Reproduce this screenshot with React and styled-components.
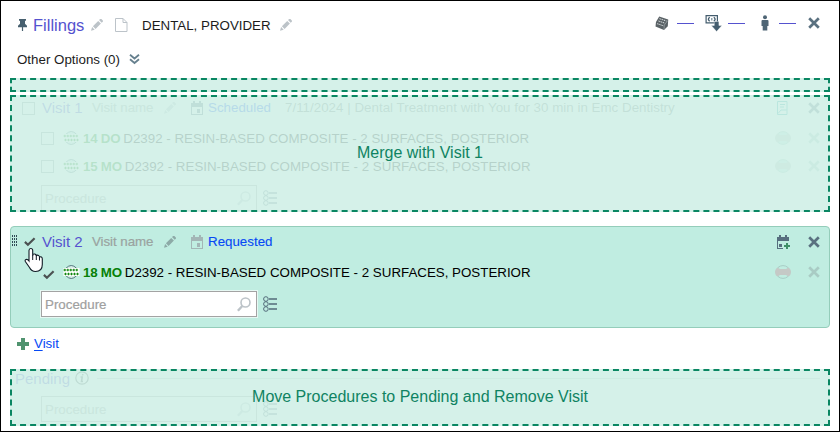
import React from "react";
import styled, { createGlobalStyle } from "styled-components";

const Global = createGlobalStyle`
  * { box-sizing: border-box; }
  body { margin: 0; background: #fff; }
`;

const Frame = styled.main`
  width: 840px;
  height: 432px;
  border: 1px solid #000;
  padding: 0 9px;
  background: #fff;
  color: #1c1c1c;
  font-family: "Liberation Sans", Arial, sans-serif;
  font-size: 13.33px;
  white-space: nowrap;
  overflow: hidden;
  display: flex;
  flex-direction: column;
  svg { display: block; flex: none; }
`;

const Header = styled.header`
  height: 48px;
  flex: none;
  display: grid;
  grid-template-columns: 16px 58px 24px 27px 138px 1fr auto;
  align-items: center;
  padding: 0 10px 0 7px;
`;

const Title = styled.h1`
  margin: 0;
  font-weight: 400;
  font-size: 16.5px;
  line-height: 20px;
  color: #5552cf;
`;

const Provider = styled.span`
  line-height: 18px;
  padding-top: 1px;
`;

const HeaderTools = styled.div`
  display: grid;
  grid-template-columns: 22px 28px 23px 33px 18px 29px 12px;
  align-items: center;
  height: 32px;
  margin-top: -4px;
`;

const Dash = styled.span`
  width: 17px;
  height: 1px;
  background: #5552cf;
  margin-top: 1px;
`;

const Options = styled.div`
  height: 20px;
  margin-bottom: 2px;
  flex: none;
  display: flex;
  align-items: center;
  gap: 9px;
  padding-left: 7px;
`;

const DropStrip = styled.div`
  height: 14px;
  flex: none;
  margin: 7px 0 3px;
  border: 2px dashed #0a8662;
  background: #d5f1e9;
`;

const Card = styled.section`
  position: relative;
  flex: none;
  height: ${(p) => p.$height}px;
  overflow: hidden;
  padding: ${(p) => (p.$active ? "0 9px 0 0" : "1px 10px 1px 1px")};
  border: ${(p) => (p.$active ? "1px solid #94cdba" : "0")};
  border-radius: ${(p) => (p.$active ? 4 : 0)}px;
  background: ${(p) => (p.$active ? "#c0ede1" : "#fff")};
`;

const DropOverlay = styled.div`
  position: absolute;
  inset: 0;
  display: flex;
  align-items: center;
  justify-content: center;
  padding-bottom: 2px;
  border: 2px dashed #0a8662;
  background: rgba(207, 239, 230, 0.88);
  color: #0f8362;
  font-size: 16px;
`;

const VisitHeader = styled.div`
  height: ${(p) => p.$height}px;
  display: grid;
  grid-template-columns: 11px 20px 50px 72px 27px 17px 77px 1fr 31px 12px;
  align-items: center;
`;

const VisitTitle = styled.h2`
  margin: 0;
  font-weight: 400;
  font-size: 15px;
  line-height: 16px;
  padding-bottom: 1px;
  color: #5552cf;
`;

const VisitName = styled.span`
  padding-bottom: 1px;
  letter-spacing: -0.05px;
  color: #9aa3a0;
  -webkit-text-stroke: 0.2px #9aa3a0;
`;

const Status = styled.a`
  padding-bottom: 1px;
  color: #0648f5;
  -webkit-text-stroke: 0.1px #0648f5;
`;

const Appointment = styled.span`
  padding-bottom: 1px;
  letter-spacing: 0.02px;
  color: #6c7674;
`;

const ProcedureRow = styled.div`
  height: 28px;
  margin-top: ${(p) => p.$top || 0}px;
  display: grid;
  grid-template-columns: 30px 22px 20px 1fr 33px 12px;
  align-items: center;
`;

const ProcedureText = styled.span`
  color: #000;
`;

const Surface = styled.b`
  color: #078007;
  font-size: 13.33px;
  letter-spacing: -0.25px;
  margin-right: 3px;
`;

const Checkbox = styled.span`
  width: 13px;
  height: 13px;
  border: 1px solid #8f9c99;
`;

const SearchRow = styled.div`
  display: flex;
  align-items: center;
  gap: 6px;
  margin: ${(p) => p.$top}px 0 0 30px;
`;

const SearchField = styled.div`
  width: 216px;
  height: 26px;
  display: flex;
  align-items: center;
  justify-content: space-between;
  padding: 0 5px 0 3px;
  border: 1px solid #a3a3a3;
  box-shadow: 0 0 0 1px rgba(255, 255, 255, 0.6);
  background: #fff;
  color: #a0a0a0;
  -webkit-text-stroke: 0.2px #a0a0a0;
`;

const AddVisit = styled.div`
  height: 32px;
  margin-bottom: 9px;
  flex: none;
  display: flex;
  align-items: center;
  gap: 5px;
  padding-left: 7px;
`;

const AddLink = styled.a`
  padding-bottom: 1px;
  color: #0648f5;
  u { text-underline-offset: 2px; }
`;

const PendingHeader = styled.div`
  height: 16px;
  display: flex;
  align-items: center;
  gap: 5px;
  padding-left: 4px;
  color: #5552cf;
  font-size: 15px;
`;

const Rule = styled.span`
  flex: 1;
  height: 1px;
  margin-left: 3px;
  background: #bcc5c3;
`;

const Cursor = styled.svg`
  position: absolute;
  left: 13px;
  top: 20px;
`;

const TitleCheck = styled.span`
  padding: 0 0 1px 1.5px;
`;

const RowCheck = styled.span`
  padding: 5px 0 0 2px;
`;

const GripSlot = styled.span`
  padding: 0 0 2px 1px;
`;

const CardGap = styled.div`
  height: 14px;
  flex: none;
`;

const Pin = () => (
  <svg width="11" height="14" viewBox="0 0 11 14" fill="#47606f">
    <path d="M2 1h7v1.8H8v3l2 2v1.4H6.1V13H4.9V9.200H1V7.800l2-2v-3H2z" />
  </svg>
);

const Pencil = ({ color = "#bcc3c8" }) => (
  <svg width="13" height="13" viewBox="0.500 0.500 13 13" fill={color}>
    <path d="M.5 12.300 1.600 8.600 4.200 11.200zM2.400 7.700 7.700 2.400 10.400 5.100 5.100 10.400zM8.500 1.600 9.700.5q.6-.4 1.200.1l1.400 1.400q.5.6 0 1.200L11.200 4.300z" />
  </svg>
);

const Page = () => (
  <svg width="13" height="15" viewBox="0 1 13 15" fill="none" stroke="#bcc3c9">
    <path d="M.5 1.500h7.500l4 4v9H.5zM8 1.500V5.500h4" />
  </svg>
);

const Chevrons = () => (
  <svg width="11" height="12" viewBox="0 0 11 12" fill="none" stroke="#66808e" strokeWidth="1.8">
    <path d="M1 1.700 5.500 5.500 10 1.700M1 6.200 5.500 10 10 6.200" />
  </svg>
);

const Close = ({ color = "#5a7180" }) => (
  <svg width="12" height="12" viewBox="0 0 12 12" fill="none" stroke={color} strokeWidth="2.700">
    <path d="M1.200 1.200 10.800 10.800M10.800 1.200 1.200 10.800" />
  </svg>
);

const Ledger = () => (
  <svg width="14" height="15" viewBox="0 0 14 15">
    <path d="M4.200.5 13.200 3.500 12.800 10.200 9 14 .5 10.500 1 6z" fill="#5a6266" />
    <path d="M4.500 2.700 11.500 5M3.500 5 10 7.200M2.200 7.700l6.500 2.200" stroke="#e3e8ea" strokeDasharray="1.400 .8" />
    <path d="M12.800 4.500 9.300 9 9 13.500" stroke="#aab2b6" strokeWidth=".6" fill="none" />
  </svg>
);

const CashDown = () => (
  <svg width="17" height="17" viewBox="-0.500 0 17 17">
    <path d="M.6.600h11.300v7.200H.6z" fill="#fff" stroke="#445d6e" strokeWidth="1.200" />
    <path d="M4.200 2.200Q1.600 4.200 4.200 6.200M8.300 2.200Q10.900 4.200 8.300 6.200" fill="none" stroke="#445d6e" strokeWidth="1.400" />
    <path d="M5.500 3h1.500v2.500H5.500z" fill="#8ba0aa" />
    <path d="M8.800 6.500h4.600v4h3L11.100 16.500 5.800 10.500h3z" fill="#445d6e" stroke="#fff" strokeWidth=".4" />
  </svg>
);

const Person = () => (
  <svg width="8" height="16" viewBox="0 0 8 16" fill="#4e6575">
    <circle cx="4" cy="2.200" r="2" />
    <path d="M1.500 5h5q1 0 1 1v5H6.300V15.500H1.700V11H.5V6q0-1 1-1z" />
  </svg>
);

const Calendar = ({ color = "#a3b6b6" }) => (
  <svg width="13" height="14" viewBox="0 0 13 14" shapeRendering="crispEdges">
    <path d="M0 2h2V0h2v2h4V0h2v2h2v12H0zM1 6v7h10V6z" fill={color} fillRule="evenodd" />
    <path d="M6 8h3v4H6z" fill={color} />
  </svg>
);

const CalendarAdd = () => (
  <svg width="14" height="14" viewBox="0 0 14 14" shapeRendering="crispEdges">
    <path d="M0 2h2V0h2v2h4V0h2v2h2v4H1v7h5v1H0z" fill="#566e7e" />
    <path d="M2 9h3v3H2z" fill="#566e7e" />
    <path d="M9 8h2v2h2v2h-2v2H9v-2H7v-2h2z" fill="#3f9068" />
  </svg>
);

const Report = () => (
  <svg width="11" height="14" viewBox="0 0 11 14" fill="none" stroke="#23a5a5">
    <path d="M.5.5h9.500v13H.5zM3 3.500h5M3 6h4M1 12.500 4 9h5.500" />
  </svg>
);

const Grip = () => (
  <GripSlot>
    <svg width="6" height="12" viewBox="0 0 6 12" fill="#2f4b56" shapeRendering="crispEdges">
      {[0, 3, 6, 9].map((y) => (
        <path key={y} d={`M0 ${y}h1v2H0zM2 ${y}h1v2H2zM4 ${y}h1v2H4z`} />
      ))}
    </svg>
  </GripSlot>
);

const Check = () => (
  <svg width="12" height="10" viewBox="0.500 0 12 10" fill="none" stroke="#4c5252" strokeWidth="2.200">
    <path d="M1.400 4.900 4.400 7.700 11.100 1.200" />
  </svg>
);

const Tooth = () => (
  <svg width="17" height="14" viewBox="0 0 17 14">
    <path d="M3 3.200Q8.200-2.200 13.500 3.200M3 10.800Q8.200 16.200 13.500 10.800" fill="#d9efe9" stroke="#53767c" />
    <path d="M.5 3h16v8H.500z" fill="#fff" />
    {[1, 4, 7, 10, 13].map((x) => (
      <path key={x} d={`M${x - 0.5} 5h2.600M${x + 0.8} 3.700v2.600`} stroke="#0f870f" strokeWidth="1.100" />
    ))}
    {[2, 5, 8, 11, 14].map((x) => (
      <path key={x} d={`M${x - 0.8} 9h2.600M${x + 0.5} 7.700v2.600`} stroke="#0f870f" strokeWidth="1.100" />
    ))}
  </svg>
);

const MutedTooth = () => (
  <svg width="17" height="14" viewBox="0 0 17 14">
    <ellipse cx="8" cy="7" rx="7" ry="6.400" fill="#c0ede1" stroke="#a8ccc5" />
    <path d="M2.500 2.500 5 4h6l2.500-1.500Q16 4 16 7t-2.500 4.500L11 10H5l-2.500 1.500Q0 10 0 7t2.500-4.500z" fill="#c5c9c6" />
  </svg>
);

const Magnifier = () => (
  <svg width="14" height="15" viewBox="0 0 14 15" fill="none" stroke="#bcc3c8">
    <circle cx="8.500" cy="5.500" r="4.500" strokeWidth="1.600" />
    <path d="M5.300 9 .9 13.700" strokeWidth="2.400" />
  </svg>
);

const ListIcon = () => (
  <svg width="15" height="16" viewBox="0 0 15 16" fill="none" stroke="#536b7a">
    <path d="M6 3h8M6 8h8M6 13h8" strokeWidth="1.700" />
    <circle cx="2.900" cy="3" r="2.300" />
    <circle cx="2.900" cy="8" r="2.300" />
    <circle cx="2.900" cy="13" r="2.300" />
  </svg>
);

const Plus = () => (
  <svg width="12" height="12" viewBox="0 0 12 12" fill="#50936f">
    <path d="M4 0h4v4h4v4H8v4H4V8H0V4h4z" />
  </svg>
);

const Info = () => (
  <svg width="14" height="14" viewBox="0 0 14 14" fill="none" stroke="#444f4f">
    <circle cx="7" cy="7" r="6.200" strokeWidth="1.200" />
    <path d="M7.800 3 7.600 4.500M5.500 6h1.700l-.7 4.500h1.500" strokeWidth="1.600" />
  </svg>
);

function Search({ top }) {
  return (
    <SearchRow $top={top}>
      <SearchField>
        Procedure
        <Magnifier />
      </SearchField>
      <ListIcon />
    </SearchRow>
  );
}

function Procedure({ surface, checked, top }) {
  return (
    <ProcedureRow $top={top}>
      <span />
      {checked ? <RowCheck><Check /></RowCheck> : <Checkbox />}
      <Tooth />
      <ProcedureText>
        <Surface>{surface}</Surface>
        D2392 - RESIN-BASED COMPOSITE - 2 SURFACES, POSTERIOR
      </ProcedureText>
      <MutedTooth />
      <Close color="#a9cbc4" />
    </ProcedureRow>
  );
}

export default function App() {
  return (
    <>
      <Global />
      <Frame>
        <Header>
          <Pin />
          <Title>Fillings</Title>
          <Pencil />
          <Page />
          <Provider>DENTAL, PROVIDER</Provider>
          <Pencil />
          <HeaderTools>
            <Ledger />
            <Dash />
            <CashDown />
            <Dash />
            <Person />
            <Dash />
            <Close />
          </HeaderTools>
        </Header>
        <Options>
          Other Options (0)
          <Chevrons />
        </Options>
        <DropStrip />
        <Card $height={117}>
          <VisitHeader $height={24}>
            <span />
            <Checkbox />
            <VisitTitle>Visit 1</VisitTitle>
            <VisitName>Visit name</VisitName>
            <Pencil />
            <Calendar color="#566e7e" />
            <Status>Scheduled</Status>
            <Appointment>7/11/2024 | Dental Treatment with You for 30 min in Emc Dentistry</Appointment>
            <Report />
            <Close />
          </VisitHeader>
          <Procedure surface="14 DO" top={4} />
          <Procedure surface="15 MO" />
          <Search top={5} />
          <DropOverlay>Merge with Visit 1</DropOverlay>
        </Card>
        <CardGap />
        <Card $height={102} $active>
          <VisitHeader $height={30}>
            <Grip />
            <TitleCheck><Check /></TitleCheck>
            <VisitTitle>Visit 2</VisitTitle>
            <VisitName>Visit name</VisitName>
            <Pencil color="#8daaa7" />
            <Calendar />
            <Status>Requested</Status>
            <span />
            <CalendarAdd />
            <Close />
          </VisitHeader>
          <Procedure surface="18 MO" checked top={1} />
          <Search top={5} />
          <Cursor width="20" height="26" viewBox="0 0 20 26">
            <path
              d="M6.800 1.500Q8.700 1.500 8.700 3.500V8.500Q9.200 6.500 11 7.100 12.300 7.500 12.300 9 13 7.600 14.500 8.400 15.500 9 15.500 10.400 16.200 9.200 17.400 10 18.300 10.600 18.300 12V17.500Q18.300 24.500 11.500 24.500 7.500 24.500 5.500 20.500L1.500 14.800Q.5 13 2 12.500 3.500 12 5 14V3.500Q5 1.500 6.800 1.500z"
              fill="#fff"
              stroke="#111c26"
              strokeWidth="1.100"
            />
            <path d="M8.700 8v5M12.300 9v4M15.500 10.500v3" stroke="#111c26" />
          </Cursor>
        </Card>
        <AddVisit>
          <Plus />
          <AddLink><u>V</u>isit</AddLink>
        </AddVisit>
        <Card $height={57}>
          <PendingHeader>
            Pending
            <Info />
            <Rule />
          </PendingHeader>
          <Search top={10} />
          <DropOverlay>Move Procedures to Pending and Remove Visit</DropOverlay>
        </Card>
      </Frame>
    </>
  );
}
